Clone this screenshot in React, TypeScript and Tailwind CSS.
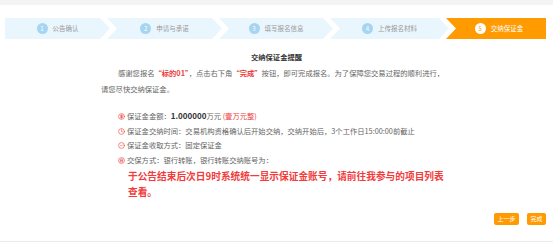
import React from 'react';
import { CircleDollarSign, Clock, CircleCheck } from 'lucide-react';

interface Step {
  no: number;
  label: string;
  width: string;
  active?: boolean;
}

const steps: Step[] = [
  { no: 1, label: '公告确认', width: 'w-[105px]' },
  { no: 2, label: '申请与承诺', width: 'w-[115px]' },
  { no: 3, label: '填写报名信息', width: 'w-[114px]' },
  { no: 4, label: '上传报名材料', width: 'w-[119px]' },
  { no: 5, label: '交纳保证金', width: 'w-[100px]', active: true },
];

// first step has a flat left side, last one a flat right side
const clipFor = (i: number) => {
  if (i === 0) return '[clip-path:polygon(0_0,calc(100%-10px)_0,100%_50%,calc(100%-10px)_100%,0_100%)]';
  if (i === steps.length - 1) return '[clip-path:polygon(0_0,100%_0,100%_100%,0_100%,10px_50%)]';
  return '[clip-path:polygon(0_0,calc(100%-10px)_0,100%_50%,calc(100%-10px)_100%,0_100%,10px_50%)]';
};

const BankIcon = () => (
  <svg width="7" height="7" viewBox="0 0 24 24" fill="none" stroke="#f04a4a" strokeWidth="2.2">
    <circle cx="12" cy="12" r="10" />
    <rect x="8" y="7" width="8" height="10" rx="1" />
    <path d="M8 12h8" />
  </svg>
);

const Steps = () => (
  <div className="ml-[5px] mt-[13px] flex h-[21px]">
    {steps.map((s, i) => (
      <div
        key={s.no}
        className={`${s.width} ${i > 0 ? '-ml-[3px]' : ''} ${clipFor(i)} ${
          s.active ? 'bg-[#ff9a00] pl-[6px]' : 'bg-[#eaf6fe]'
        } flex h-full items-center justify-center gap-[5px]`}
      >
        <span
          className={`flex h-[11px] w-[11px] items-center justify-center rounded-full text-[6px] leading-none ${
            s.active ? 'bg-white text-[#ff9a00]' : 'bg-[#a6d5f1] text-white'
          }`}
        >
          {s.no}
        </span>
        <span className={`text-[6.5px] ${s.active ? 'text-white' : 'text-[#999]'}`}>{s.label}</span>
      </div>
    ))}
  </div>
);

export default function App() {
  return (
    <div className="flex h-[245px] w-[553px] flex-col overflow-hidden bg-white font-['Noto_Sans_CJK_SC','Microsoft_YaHei',sans-serif]">
      <div className="h-[5px] bg-[#f4f4f4]" />
      <Steps />

      <h2 className="mt-[12px] text-center text-[7.3px] font-bold leading-[12px] text-[#333]">交纳保证金提醒</h2>

      <p className="mt-[2px] pl-[101px] text-[7.3px] leading-[16px] text-[#666]">
        <span className="pl-[17px]">感谢您报名</span>
        <span className="font-bold text-[#ec3b3b]">“标的01”</span>，点击右下角
        <span className="font-bold text-[#ec3b3b]">“完成”</span>按钮，即可完成报名。为了保障您交易过程的顺利进行，
        <br />
        请您尽快交纳保证金。
      </p>

      <ul className="mt-[12px] pl-[118px] text-[7.3px] leading-[14.7px] text-[#666]">
        <li className="flex items-center gap-[2px]">
          <CircleDollarSign size={7} color="#f04a4a" strokeWidth={2.2} />
          <span>
            保证金金额：<span className="text-[8px] font-bold text-[#333]">1.000000</span>万元
            <span className="text-[#ec3b3b]"> (壹万元整)</span>
          </span>
        </li>
        <li className="flex items-center gap-[2px]">
          <Clock size={7} color="#f04a4a" strokeWidth={2.2} />
          <span>保证金交纳时间：交易机构资格确认后开始交纳，交纳开始后，3个工作日15:00:00前截止</span>
        </li>
        <li className="flex items-center gap-[2px]">
          <CircleCheck size={7} color="#f04a4a" strokeWidth={2.2} />
          <span>保证金收取方式：固定保证金</span>
        </li>
        <li className="flex items-center gap-[2px]">
          <BankIcon />
          <span>交保方式：银行转账，银行转账交纳账号为：</span>
        </li>
      </ul>

      <p className="pl-[128px] text-[9.7px] font-bold leading-[16px] text-[#f23b3b]">
        于公告结束后次日9时系统统一显示保证金账号，请前往我参与的项目列表
        <br />
        查看。
      </p>

      <div className="mt-[13px] flex justify-end gap-[8px] pr-[7px]">
        <button className="h-[12px] w-[25px] rounded-[2px] bg-[#ff9a00] text-[6px] leading-[12px] text-white">上一步</button>
        <button className="h-[12px] w-[19px] rounded-[2px] bg-[#ff9a00] text-[6px] leading-[12px] text-white">完成</button>
      </div>

      <div className="mt-auto h-[4px] border-t border-[#ececec] bg-white" />
    </div>
  );
}
